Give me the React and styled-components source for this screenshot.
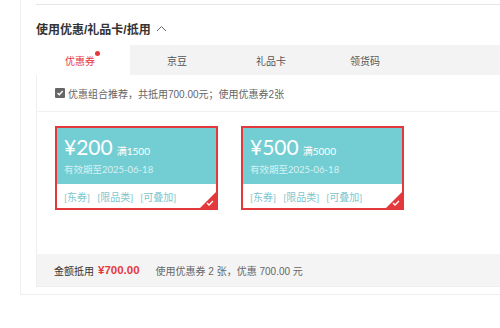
import React from "react";
import styled, { createGlobalStyle } from "styled-components";

const Global = createGlobalStyle`
  html, body { margin: 0; padding: 0; background: #fff; overflow: hidden; }
  body { font-family: "Liberation Sans", "Noto Sans CJK SC", sans-serif; color: #333; }
`;

const Panel = styled.div`
  margin-left: 20px;
  width: 520px;
  border-left: 1px solid #eee;
  border-bottom: 1px solid #eee;
  padding: 0 0 7px 15px;
`;

const TopRule = styled.div`
  height: 4px;
  border-bottom: 1px solid #e6e6e6;
`;

const Title = styled.div`
  display: flex;
  align-items: center;
  gap: 5px;
  margin: 13px 0 7px;
  height: 20px;
  font-size: 12px;
  font-weight: bold;
  color: #333;
`;

const Tabs = styled.div`
  display: flex;
  height: 30px;
  background: #f3f3f3;
`;

const Tab = styled.div`
  width: 94px;
  display: flex;
  align-items: center;
  justify-content: center;
  font-size: 10px;
  background: ${(p) => (p.$active ? "#fff" : "transparent")};
  color: ${(p) => (p.$active ? "#e4393c" : "#555")};
`;

const TabLabel = styled.span`
  position: relative;
  left: -3px;
`;

const Dot = styled.i`
  position: absolute;
  top: -2px;
  right: -5px;
  width: 5px;
  height: 5px;
  border-radius: 50%;
  background: #e4393c;
`;

const Content = styled.div`
  border-left: 1px solid #eee;
  border-bottom: 1px solid #eee;
`;

const CheckRow = styled.div`
  display: flex;
  align-items: center;
  gap: 3px;
  height: 36px;
  padding-left: 18px;
  font-size: 10px;
  color: #666;
  border-bottom: 1px solid #f2f2f2;
`;

const Box = styled.span`
  width: 10px;
  height: 10px;
  border-radius: 1px;
  background: #666;
  display: flex;
  align-items: center;
  justify-content: center;
`;

const Coupons = styled.div`
  display: flex;
  gap: 23px;
  padding: 14px 0 0 18px;
  height: 142px;
  box-sizing: border-box;
`;

const Card = styled.div`
  position: relative;
  width: 163px;
  height: 84px;
  box-sizing: border-box;
  border: 2px solid #e4393c;
  display: flex;
  flex-direction: column;
  overflow: hidden;
  font-family: "Lato", "Noto Sans CJK SC", sans-serif;
`;

const CardTop = styled.div`
  background: #73ced4;
  height: 56px;
  padding: 7px 0 0 7px;
  box-sizing: border-box;
  color: #fff;
`;

const Amount = styled.div`
  display: flex;
  align-items: baseline;
  gap: 4px;
  height: 24px;
`;

const Big = styled.span`
  font-size: 21px;
  line-height: 24px;
`;

const Cond = styled.span`
  font-size: 10px;
`;

const Expire = styled.div`
  font-size: 9.5px;
  margin-top: 3px;
  color: rgba(255, 255, 255, 0.72);
`;

const Tags = styled.div`
  flex: 1;
  display: flex;
  align-items: center;
  gap: 7px;
  padding-left: 7px;
  font-size: 10px;
  color: #7cc6cd;
  background: #fff;
`;

const Corner = styled.svg`
  position: absolute;
  right: 0;
  bottom: 0;
`;

const Footer = styled.div`
  display: flex;
  align-items: center;
  height: 32px;
  background: #f4f4f4;
  padding-left: 17px;
  font-size: 10px;
  color: #333;
`;

const Price = styled.span`
  color: #e4393c;
  font-weight: bold;
  font-size: 11.5px;
  margin: 0 16px 0 4px;
  font-family: "Liberation Sans", sans-serif;
`;

const Note = styled.span`
  color: #666;
`;

function Coupon({ amount, cond }) {
  return (
    <Card>
      <CardTop>
        <Amount>
          <Big>¥{amount}</Big>
          <Cond>满{cond}</Cond>
        </Amount>
        <Expire>有效期至2025-06-18</Expire>
      </CardTop>
      <Tags>
        <span>[东券]</span>
        <span>[限品类]</span>
        <span>[可叠加]</span>
      </Tags>
      <Corner width="16" height="16" viewBox="0 0 16 16">
        <polygon points="16,0 16,16 0,16" fill="#e4393c" />
        <polyline points="7,11 9,13 13,9" fill="none" stroke="#fff" strokeWidth="1.3" />
      </Corner>
    </Card>
  );
}

export default function App() {
  return (
    <>
      <Global />
      <Panel>
        <TopRule />
        <Title>
          使用优惠/礼品卡/抵用
          <svg width="11" height="7" viewBox="0 0 11 7">
            <polyline points="1,6 5.5,1.5 10,6" fill="none" stroke="#666" strokeWidth="1" />
          </svg>
        </Title>
        <Tabs>
          <Tab $active>
            <TabLabel>
              优惠券
              <Dot />
            </TabLabel>
          </Tab>
          <Tab>京豆</Tab>
          <Tab>礼品卡</Tab>
          <Tab>领货码</Tab>
        </Tabs>
        <Content>
          <CheckRow>
            <Box>
              <svg width="8" height="8" viewBox="0 0 8 8">
                <polyline points="1.5,4 3.3,5.8 6.7,2" fill="none" stroke="#fff" strokeWidth="1.4" />
              </svg>
            </Box>
            优惠组合推荐，共抵用700.00元；使用优惠券2张
          </CheckRow>
          <Coupons>
            <Coupon amount="200" cond="1500" />
            <Coupon amount="500" cond="5000" />
          </Coupons>
          <Footer>
            金额抵用<Price>¥700.00</Price>
            <Note>使用优惠券 2 张，优惠 700.00 元</Note>
          </Footer>
        </Content>
      </Panel>
    </>
  );
}
